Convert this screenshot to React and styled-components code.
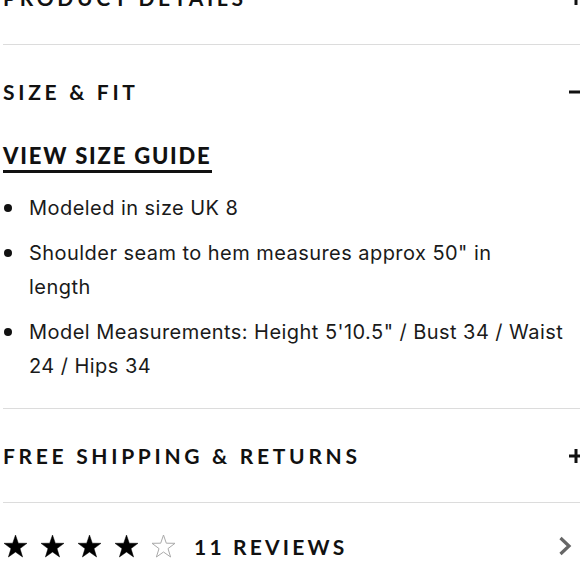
import React from 'react'
import styled, { createGlobalStyle } from 'styled-components'

const GlobalStyle = createGlobalStyle`
  html, body {
    margin: 0;
    padding: 0;
    background: #fff;
    overflow: hidden;
  }
  body {
    font-family: Inter, "Noto Sans", sans-serif;
    color: #111;
  }
`

const Page = styled.div`
  margin: -49px 0 0 3px;
  width: 580px;
`

const Section = styled.div`
  border-bottom: 1px solid #dcdcdc;
`

const Header = styled.div`
  display: flex;
  align-items: center;
  justify-content: space-between;
  height: 93px;
`

const Title = styled.h3`
  margin: 0;
  font-family: Lato, "Liberation Sans", sans-serif;
  font-weight: 700;
  font-size: 21px;
  letter-spacing: 3.7px;
  color: #111;
`

const Toggle = styled.svg`
  width: 14px;
  height: 14px;
  flex: none;
`

const Body = styled.div`
  padding: 6px 0 25px;
`

const GuideLink = styled.a`
  display: inline-block;
  font-family: Lato, "Liberation Sans", sans-serif;
  font-weight: 900;
  font-size: 22px;
  letter-spacing: 1.8px;
  line-height: 24px;
  color: #111;
  text-decoration: none;
  padding-bottom: 2px;
  border-bottom: 3px solid #111;
`

const List = styled.ul`
  list-style: none;
  margin: 18px 0 0;
  padding: 0 6px 0 0;
`

const Item = styled.li`
  position: relative;
  padding-left: 26px;
  font-size: 20px;
  letter-spacing: 0.45px;
  line-height: 34px;
  color: #1a1a1a;
  & + & {
    margin-top: 11px;
  }
  &::before {
    content: '';
    position: absolute;
    left: 1px;
    top: 13px;
    width: 8px;
    height: 8px;
    border-radius: 50%;
    background: #111;
  }
`

const ReviewRow = styled.div`
  display: flex;
  align-items: center;
  height: 86px;
`

const Stars = styled.div`
  display: flex;
  gap: 12px;
`

const ReviewCount = styled.span`
  margin-left: 18px;
  font-family: Lato, "Liberation Sans", sans-serif;
  font-weight: 700;
  font-size: 21px;
  letter-spacing: 3.2px;
  flex: 1;
`

const Chevron = styled.svg`
  width: 14px;
  height: 20px;
  margin-right: 11px;
`

function Star({ filled }) {
  return (
    <svg width="25" height="24" viewBox="0 0 25 24">
      <path
        d="M12.5 1 L15.3 9.2 L24 9.3 L17 14.6 L19.6 23 L12.5 18 L5.4 23 L8 14.6 L1 9.3 L9.7 9.2 Z"
        fill={filled ? '#000' : 'none'}
        stroke={filled ? '#000' : '#aaa'}
        strokeWidth={filled ? 0.5 : 1}
      />
    </svg>
  )
}

function PlusMinus({ open }) {
  return (
    <Toggle viewBox="0 0 14 14">
      <path d="M0 7 H14" stroke="#111" strokeWidth="3" />
      {!open && <path d="M7 0 V14" stroke="#111" strokeWidth="3" />}
    </Toggle>
  )
}

export default function App() {
  return (
    <>
      <GlobalStyle />
      <Page>
        <Section>
          <Header>
            <Title>PRODUCT DETAILS</Title>
            <PlusMinus />
          </Header>
        </Section>
        <Section>
          <Header>
            <Title>SIZE &amp; FIT</Title>
            <PlusMinus open />
          </Header>
          <Body>
            <GuideLink href="#">VIEW SIZE GUIDE</GuideLink>
            <List>
              <Item>Modeled in size UK 8</Item>
              <Item>
                Shoulder seam to hem measures approx 50" in
                <br />
                length
              </Item>
              <Item>Model Measurements: Height 5'10.5" / Bust 34 / Waist 24 / Hips 34</Item>
            </List>
          </Body>
        </Section>
        <Section>
          <Header>
            <Title>FREE SHIPPING &amp; RETURNS</Title>
            <PlusMinus />
          </Header>
        </Section>
        <ReviewRow>
          <Stars>
            {[1, 2, 3, 4, 5].map((n) => (
              <Star key={n} filled={n <= 4} />
            ))}
          </Stars>
          <ReviewCount>11 REVIEWS</ReviewCount>
          <Chevron viewBox="0 0 14 20">
            <path d="M2.5 2 L11 10 L2.5 18" fill="none" stroke="#666" strokeWidth="3.2" />
          </Chevron>
        </ReviewRow>
      </Page>
    </>
  )
}
